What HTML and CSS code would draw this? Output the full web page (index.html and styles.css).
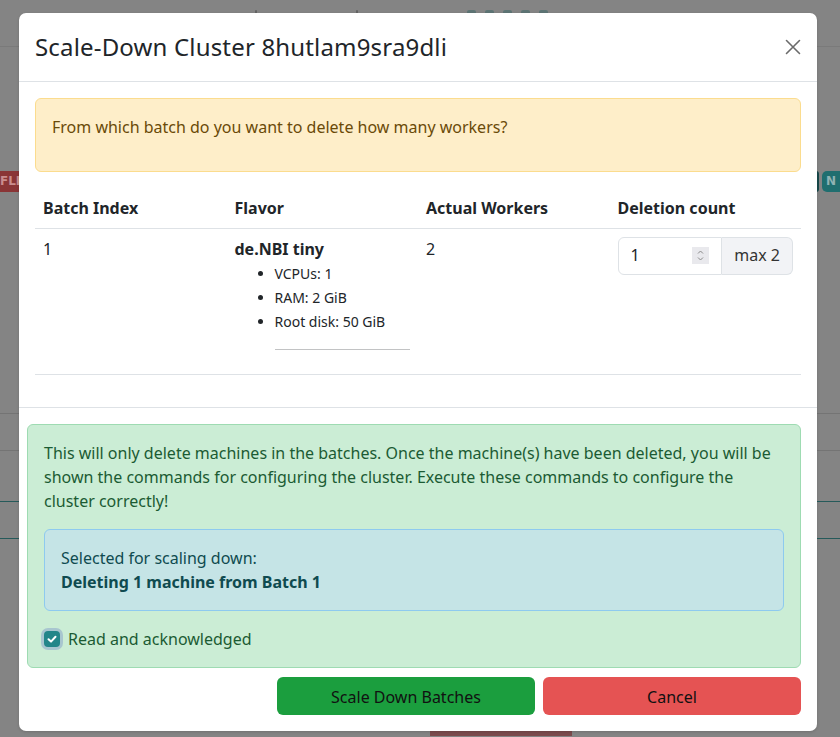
FILE: index.html
```html
<!DOCTYPE html>
<html lang="en">
<head>
<meta charset="utf-8">
<title>Scale-Down Cluster</title>
<link rel="stylesheet" href="styles.css">
</head>
<body>
<div class="page">
  <div class="topbar">
    <span class="ti t1"></span><span class="ti t2"></span><span class="ti t3"></span><span class="ti t4"></span><span class="ti t5"></span><span class="ti t6"></span><span class="ti t7"></span>
  </div>
  <div class="badges">
    <span class="badge red">FLI</span>
    <span class="badges-right"><span class="badge dark"></span><span class="badge teal">N</span></span>
  </div>
  <div class="line gray l1"></div>
  <div class="line gray l2"></div>
  <div class="line teal l3"></div>
  <div class="line teal l4"></div>
  <div class="bottom-btn"></div>
</div>

<div class="modal">
  <div class="modal-header">
    <h4 class="modal-title">Scale-Down Cluster 8hutlam9sra9dli</h4>
    <span class="btn-close" aria-label="Close">
      <svg width="16" height="16" viewBox="0 0 16 16"><path d="M1.5 1.5 L14.5 14.5 M14.5 1.5 L1.5 14.5" stroke="#6b6b6b" stroke-width="1.6" fill="none" stroke-linecap="round"/></svg>
    </span>
  </div>
  <div class="modal-body">
    <div class="alert alert-warning"><p>From which batch do you want to delete how many workers?</p></div>
    <table class="batch-table">
      <thead>
        <tr><th>Batch Index</th><th>Flavor</th><th>Actual Workers</th><th>Deletion count</th></tr>
      </thead>
      <tbody>
        <tr>
          <td>1</td>
          <td>
            <div class="flavor-name">de.NBI tiny</div>
            <ul class="flavor-list">
              <li>VCPUs: 1</li>
              <li>RAM: 2 GiB</li>
              <li>Root disk: 50 GiB</li>
              <hr class="flavor-hr">
            </ul>
          </td>
          <td>2</td>
          <td>
            <div class="input-group">
              <div class="num-field">
                <span class="num-value">1</span>
                <span class="spinner">
                  <svg width="17" height="17" viewBox="0 0 17 17"><path d="M6 6.5 L8.5 4 L11 6.5" stroke="#8a8a8a" stroke-width="1" fill="none"/><path d="M6 10.5 L8.5 13 L11 10.5" stroke="#8a8a8a" stroke-width="1" fill="none"/></svg>
                </span>
              </div>
              <div class="addon">max 2</div>
            </div>
          </td>
        </tr>
      </tbody>
    </table>
  </div>
  <div class="modal-footer">
    <div class="alert alert-success">
      <p>This will only delete machines in the batches. Once the machine(s) have been deleted, you will be shown the commands for configuring the cluster. Execute these commands to configure the cluster correctly!</p>
      <div class="alert alert-info">
        <div>Selected for scaling down:</div>
        <div class="strong">Deleting 1 machine from Batch 1</div>
      </div>
      <label class="check">
        <span class="check-box"><svg width="16" height="16" viewBox="0 0 16 16"><path d="M4.5 8.3 L7 10.6 L11.5 5.8" stroke="#fff" stroke-width="2" fill="none" stroke-linecap="round" stroke-linejoin="round"/></svg></span>
        <span>Read and acknowledged</span>
      </label>
    </div>
    <div class="actions">
      <button class="btn btn-success">Scale Down Batches</button>
      <button class="btn btn-danger">Cancel</button>
    </div>
  </div>
</div>
</body>
</html>
```
FILE: styles.css
```css
* { box-sizing: border-box; }
html, body { margin: 0; padding: 0; }
body {
  width: 840px;
  height: 737px;
  overflow: hidden;
  background: #848484;
  font-family: "Noto Sans", "Open Sans", sans-serif;
  font-size: 16px;
  line-height: 24px;
  color: #212529;
  position: relative;
}

/* background page (seen through backdrop) */
.page { width: 840px; height: 737px; }
.topbar {
  height: 47px;
  border-bottom: 1px solid #7a7a7a;
  display: flex;
  gap: 9px;
  padding: 10px 0 0 255px;
}
.ti { display: block; width: 9px; height: 3px; background: #4d6e6e; border-radius: 2px 2px 0 0; opacity: .7; }
.t1 { width: 2px; margin-right: 90px; background: #555; }
.t2 { width: 2px; margin-right: 100px; background: #555; }
.badges {
  display: flex;
  justify-content: space-between;
  margin-top: 124px;
  height: 21px;
}
.badge {
  display: inline-block;
  height: 21px;
  font-family: "DejaVu Sans", sans-serif;
  font-weight: bold;
  font-size: 12px;
  line-height: 21px;
  border-radius: 4px;
}
.badge.red { background: #8a3536; color: #c98d8e; width: 19px; overflow: hidden; border-radius: 0; padding-left: 0; white-space: nowrap; }
.badges-right { display: flex; gap: 3px; }
.badge.dark { background: #17484a; width: 3px; border-radius: 0 4px 4px 0; }
.badge.teal { background: #1f6e6f; color: #8fb3b3; width: 18px; padding-left: 4px; border-radius: 5px 0 0 5px; }
.line { height: 1px; }
.line.gray { background: #747474; }
.line.teal { background: #255a5a; }
.l1 { margin-top: 221px; }
.l2 { margin-top: 36px; }
.l3 { margin-top: 50px; }
.l4 { margin-top: 36px; }
.bottom-btn { margin: 191px 0 0 430px; width: 142px; height: 6px; background: #7b4b4d; }

/* modal */
.modal {
  position: absolute;
  left: 19px;
  top: 13px;
  width: 798px;
  height: 718px;
  background: #fff;
  border-radius: 7px;
  box-shadow: 0 1px 3px rgba(0,0,0,.15);
}
.modal-header {
  display: flex;
  align-items: center;
  justify-content: space-between;
  padding: 16px 16px;
  border-bottom: 1px solid #dee2e6;
}
.modal-title {
  margin: 0;
  font-size: 24px;
  line-height: 36px;
  font-weight: 400;
  letter-spacing: 0.17px;
  color: #212529;
}
.btn-close { display: block; width: 16px; height: 16px; }
.btn-close svg { display: block; }

.modal-body { padding: 16px; border-bottom: 1px solid #dee2e6; }

.alert { border: 1px solid transparent; border-radius: 6px; padding: 16px; }
.alert p { margin: 0 0 16px 0; }
.alert-warning { background: #feeec9; border-color: #fbdc8e; color: #6a4a08; margin-bottom: 16px; }

.batch-table {
  width: 100%;
  border-collapse: collapse;
  table-layout: fixed;
  margin-bottom: 16px;
}
.batch-table th {
  text-align: left;
  font-weight: 700;
  padding: 8px;
  border-bottom: 1px solid #dee2e6;
}
.batch-table td {
  vertical-align: top;
  padding: 8px;
  border-bottom: 1px solid #dee2e6;
}
.flavor-name { font-weight: 700; }
.flavor-list {
  margin: 0;
  padding: 1px 0 0 40px;
  font-size: 14px;
  line-height: 24px;
}
.flavor-hr {
  margin: 15px 0 16px;
  border: 0;
  border-top: 1px solid #c2c3c4;
}

.input-group { display: flex; height: 38px; }
.num-field {
  flex: 1;
  display: flex;
  align-items: center;
  justify-content: space-between;
  padding: 0 12px;
  border: 1px solid #dee2e6;
  border-radius: 6px 0 0 6px;
  background: #fff;
}
.num-value { margin-top: -2px; }
.spinner { display: block; width: 17px; height: 17px; background: #e9e9ed; margin-top: -2px; }
.spinner svg { display: block; }
.addon {
  display: flex;
  align-items: center;
  padding: 0 12px 2px;
  border: 1px solid #dee2e6;
  border-left: 0;
  border-radius: 0 6px 6px 0;
  background: #f2f3f6;
  color: #333;
}

.modal-footer { padding: 16px 16px 15px 8px; }
.alert-success {
  background: #cbedd5;
  border-color: #9edbb2;
  color: #1b5b33;
  margin-bottom: 9px;
}
.alert-info {
  background: #c5e4e6;
  border-color: #8ecaef;
  color: #0f4b50;
  margin-bottom: 16px;
}
.strong { font-weight: 700; }
.check { display: flex; align-items: center; gap: 8px; }
.check-box {
  display: block;
  width: 16px;
  height: 16px;
  border-radius: 4px;
  background: #238689;
  box-shadow: 0 0 0 3px #a8c6cf;
}
.check-box svg { display: block; }

.actions { display: flex; justify-content: flex-end; gap: 8px; }
.btn {
  width: 258px;
  height: 38px;
  border: 0;
  border-radius: 6px;
  font-family: "Noto Sans", "Open Sans", sans-serif;
  font-size: 16px;
  line-height: 24px;
  color: #111;
  padding: 1px 0 0;
}
.btn-success { background: #1b9e3e; }
.btn-danger { background: #e55353; }
```
